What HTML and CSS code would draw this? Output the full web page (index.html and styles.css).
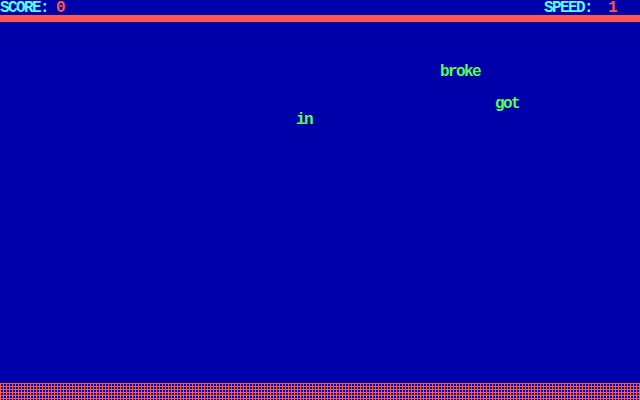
FILE: index.html
```html
<!DOCTYPE html>
<html>
<head>
<meta charset="utf-8">
<link rel="stylesheet" href="styles.css">
<title>Typing game</title>
</head>
<body>
<div class="screen">
  <header class="status">
    <div class="stat"><span class="label">SCORE:</span> <span class="value">0</span></div>
    <div class="stat"><span class="label">SPEED:</span>  <span class="value">1</span></div>
  </header>
  <div class="bar"></div>
  <main class="field">
    <span class="word" style="left:440px;top:42px">broke</span>
    <span class="word" style="left:495px;top:74px">got</span>
    <span class="word" style="left:296px;top:90px">in</span>
  </main>
  <footer class="ground"></footer>
</div>
</body>
</html>
```
FILE: styles.css
```css
html, body {
  margin: 0;
  padding: 0;
  background: #0000AA;
}
.screen {
  width: 640px;
  height: 400px;
  display: flex;
  flex-direction: column;
  background: #0000AA;
  font-family: "Liberation Mono", "DejaVu Sans Mono", monospace;
  font-weight: bold;
  font-size: 16px;
  letter-spacing: -1.6px;
  line-height: 16px;
  overflow: hidden;
}
.status {
  height: 15px;
  display: flex;
  justify-content: space-between;
  padding-right: 24px;
  white-space: pre;
}
.label { color: #55FFFF; }
.value { color: #FF5555; }
.bar {
  height: 7px;
  background: #FF5555;
}
.field {
  flex: 1;
  position: relative;
}
.word {
  position: absolute;
  color: #55FF55;
  white-space: pre;
}
.ground {
  height: 17px;
  flex: none;
  background-color: #0000AA;
  background-image:
    linear-gradient(to bottom, #FF5555 1px, transparent 1px),
    linear-gradient(to right, #FF5555 1px, transparent 1px);
  background-size: 3px 3px, 3px 3px;
}
```
